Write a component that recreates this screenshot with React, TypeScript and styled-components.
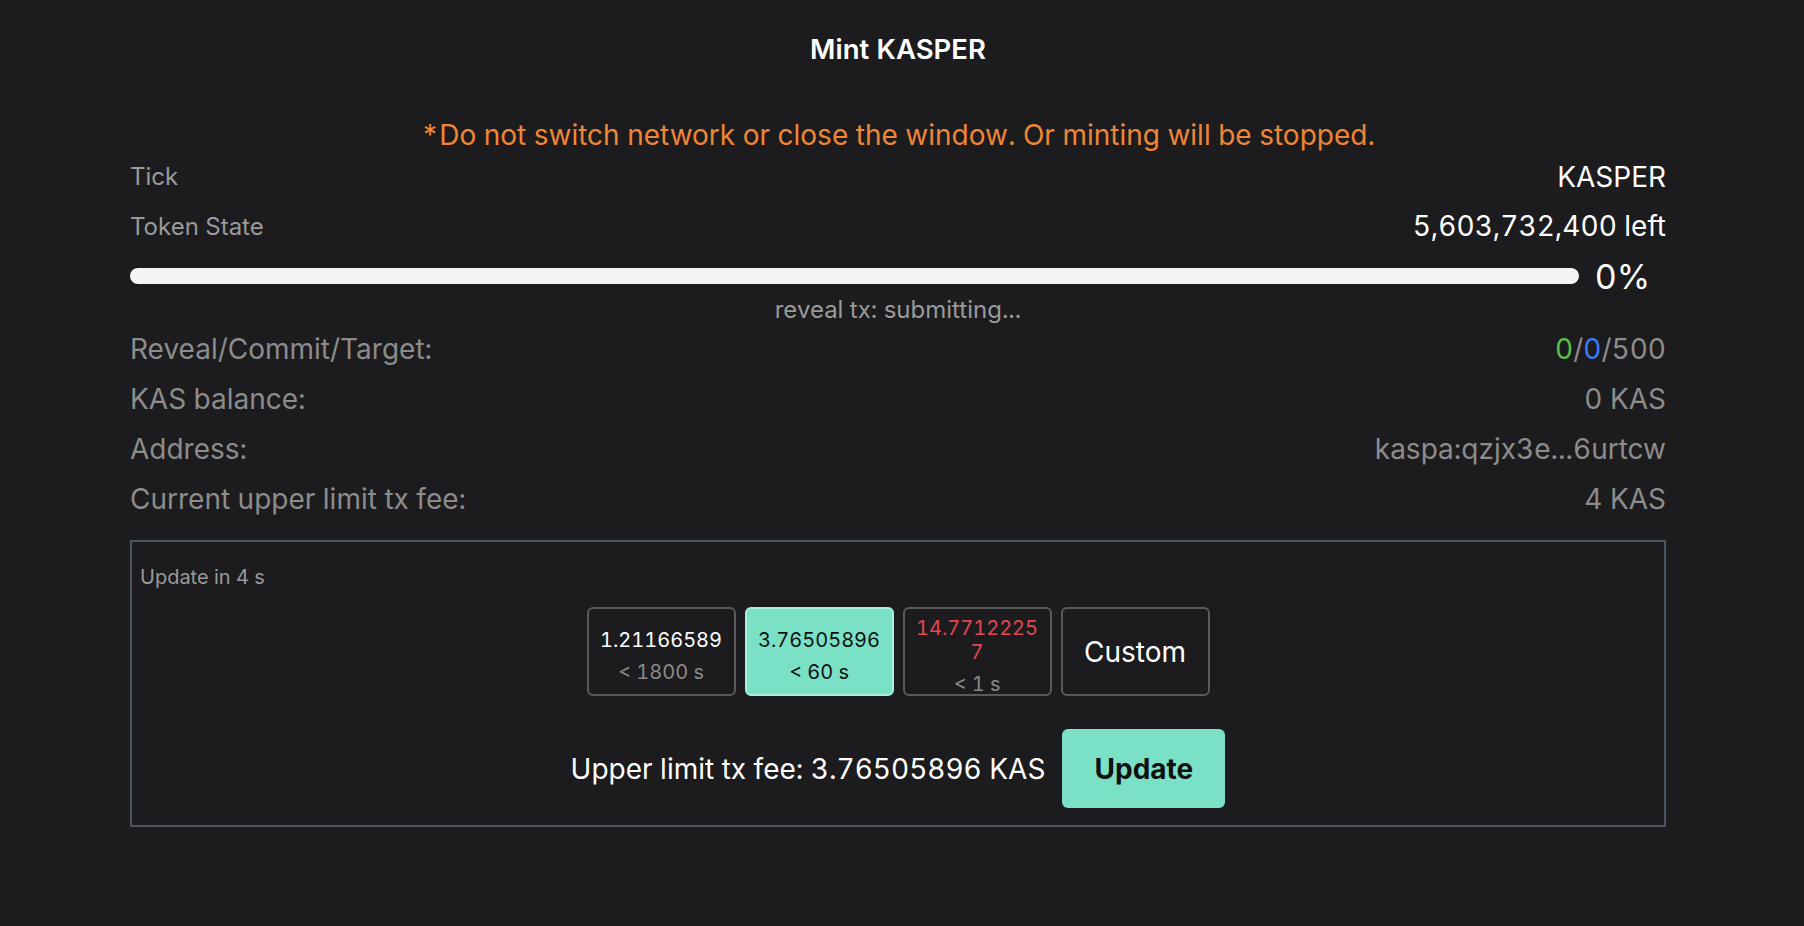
import React from "react";
import styled, { createGlobalStyle } from "styled-components";

const GlobalStyle = createGlobalStyle`
  html, body {
    margin: 0;
    padding: 0;
    background: #1c1b1d;
  }
  body {
    font-family: Inter, "Noto Sans", "Liberation Sans", sans-serif;
    font-variant-numeric: tabular-nums;
    color: #ffffff;
  }
  * {
    box-sizing: border-box;
  }
`;

const Page = styled.div`
  min-height: 926px;
  background: #1c1b1d;
  padding: 31px 0 0 130px;
`;

const Content = styled.div`
  width: 1536px;
  display: flex;
  flex-direction: column;
`;

const Title = styled.h1`
  margin: 0;
  font-size: 27.5px;
  line-height: 36px;
  font-weight: 600;
  text-align: center;
  color: #ffffff;
`;

const Warning = styled.div`
  margin-top: 50px;
  font-size: 28px;
  line-height: 36px;
  text-align: center;
  color: #ef8636;
`;

type RowProps = {
  $height: number;
};

const InfoRow = styled.div<RowProps>`
  height: ${(p) => p.$height}px;
  display: flex;
  align-items: center;
  justify-content: space-between;
`;

const SmallLabel = styled.span`
  font-size: 24px;
  color: #9a9a9a;
`;

const BigValue = styled.span`
  font-size: 28px;
  color: #ffffff;
`;

const ProgressRow = styled.div`
  height: 48px;
  display: flex;
  align-items: center;
`;

const Track = styled.div`
  flex: 1;
  height: 16px;
  border-radius: 8px;
  background: #f4f4f4;
  overflow: hidden;
`;

const Fill = styled.div`
  height: 100%;
  background: #7be1c6;
`;

const Percent = styled.span`
  width: 87px;
  text-align: center;
  font-size: 34px;
  color: #ffffff;
`;

const Status = styled.div`
  font-size: 24px;
  line-height: 20px;
  text-align: center;
  color: #9a9a9a;
`;

const Stats = styled.div`
  padding-top: 4px;
  display: flex;
  flex-direction: column;
`;

const StatRow = styled.div`
  height: 50px;
  display: flex;
  align-items: center;
  justify-content: space-between;
  font-size: 28px;
  color: #8c8c8c;
`;

const Green = styled.span`
  color: #5cbf4a;
`;

const Blue = styled.span`
  color: #3b7cf6;
`;

const FeeBox = styled.div`
  margin-top: 16px;
  border: 2px solid #4d5461;
  padding: 23px 8px 17px 8px;
  display: flex;
  flex-direction: column;
`;

const Countdown = styled.div`
  font-size: 20px;
  line-height: 24px;
  color: #9a9a9a;
`;

const FeeOptions = styled.div`
  margin-top: 18px;
  display: flex;
  justify-content: center;
  gap: 9px;
`;

type OptionProps = {
  $active?: boolean;
};

const FeeOption = styled.button<OptionProps>`
  width: 149px;
  height: 89px;
  padding: 8px 10px 0;
  border-radius: 6px;
  border: 2px solid ${(p) => (p.$active ? "#a8f0dd" : "#5a5a5a")};
  background: ${(p) => (p.$active ? "#7be1c6" : "transparent")};
  display: flex;
  flex-direction: column;
  align-items: center;
  justify-content: center;
  font-family: inherit;
  font-variant-numeric: tabular-nums;
  cursor: pointer;
  overflow: hidden;
`;

type FeeTextProps = {
  $tone: "light" | "dark" | "red";
};

const feeColors = {
  light: "#ffffff",
  dark: "#111111",
  red: "#e2474f",
};

const FeeValue = styled.div<FeeTextProps>`
  font-size: 20px;
  line-height: 24px;
  color: ${(p) => feeColors[p.$tone]};
  word-break: break-all;
  text-align: center;
`;

const FeeTime = styled.div<OptionProps>`
  margin-top: 8px;
  font-size: 20px;
  line-height: 24px;
  color: ${(p) => (p.$active ? "#111111" : "#8a8a8a")};
`;

const CustomLabel = styled.span`
  font-size: 28px;
  color: #ffffff;
  margin-top: -8px;
`;

const SubmitRow = styled.div`
  margin-top: 33px;
  display: flex;
  align-items: center;
  justify-content: center;
  gap: 17px;
`;

const SubmitText = styled.span`
  font-size: 28px;
  color: #ffffff;
`;

const UpdateButton = styled.button`
  width: 163px;
  height: 79px;
  border: none;
  border-radius: 6px;
  background: #7be1c6;
  color: #111111;
  font-family: inherit;
  font-size: 28px;
  font-weight: 700;
  cursor: pointer;
`;

const fees = [
  { value: "1.21166589", time: "< 1800 s", tone: "light" as const },
  { value: "3.76505896", time: "< 60 s", tone: "dark" as const, active: true },
  { value: "14.77122257", time: "< 1 s", tone: "red" as const },
];

const App = () => {
  const progress = 0;

  return (
    <>
      <GlobalStyle />
      <Page>
        <Content>
          <Title>Mint KASPER</Title>
          <Warning>*Do not switch network or close the window. Or minting will be stopped.</Warning>

          <InfoRow $height={47}>
            <SmallLabel>Tick</SmallLabel>
            <BigValue>KASPER</BigValue>
          </InfoRow>
          <InfoRow $height={52}>
            <SmallLabel>Token State</SmallLabel>
            <BigValue>5,603,732,400 left</BigValue>
          </InfoRow>

          <ProgressRow>
            <Track>
              <Fill style={{ width: `${progress}%` }} />
            </Track>
            <Percent>{progress}%</Percent>
          </ProgressRow>
          <Status>reveal tx: submitting...</Status>

          <Stats>
            <StatRow>
              <span>Reveal/Commit/Target:</span>
              <span>
                <Green>0</Green>/<Blue>0</Blue>/500
              </span>
            </StatRow>
            <StatRow>
              <span>KAS balance:</span>
              <span>0 KAS</span>
            </StatRow>
            <StatRow>
              <span>Address:</span>
              <span>kaspa:qzjx3e...6urtcw</span>
            </StatRow>
            <StatRow>
              <span>Current upper limit tx fee:</span>
              <span>4 KAS</span>
            </StatRow>
          </Stats>

          <FeeBox>
            <Countdown>Update in 4 s</Countdown>
            <FeeOptions>
              {fees.map((fee) => (
                <FeeOption key={fee.value} $active={fee.active}>
                  <FeeValue $tone={fee.tone}>{fee.value}</FeeValue>
                  <FeeTime $active={fee.active}>{fee.time}</FeeTime>
                </FeeOption>
              ))}
              <FeeOption>
                <CustomLabel>Custom</CustomLabel>
              </FeeOption>
            </FeeOptions>
            <SubmitRow>
              <SubmitText>Upper limit tx fee: 3.76505896 KAS</SubmitText>
              <UpdateButton>Update</UpdateButton>
            </SubmitRow>
          </FeeBox>
        </Content>
      </Page>
    </>
  );
};

export default App;
